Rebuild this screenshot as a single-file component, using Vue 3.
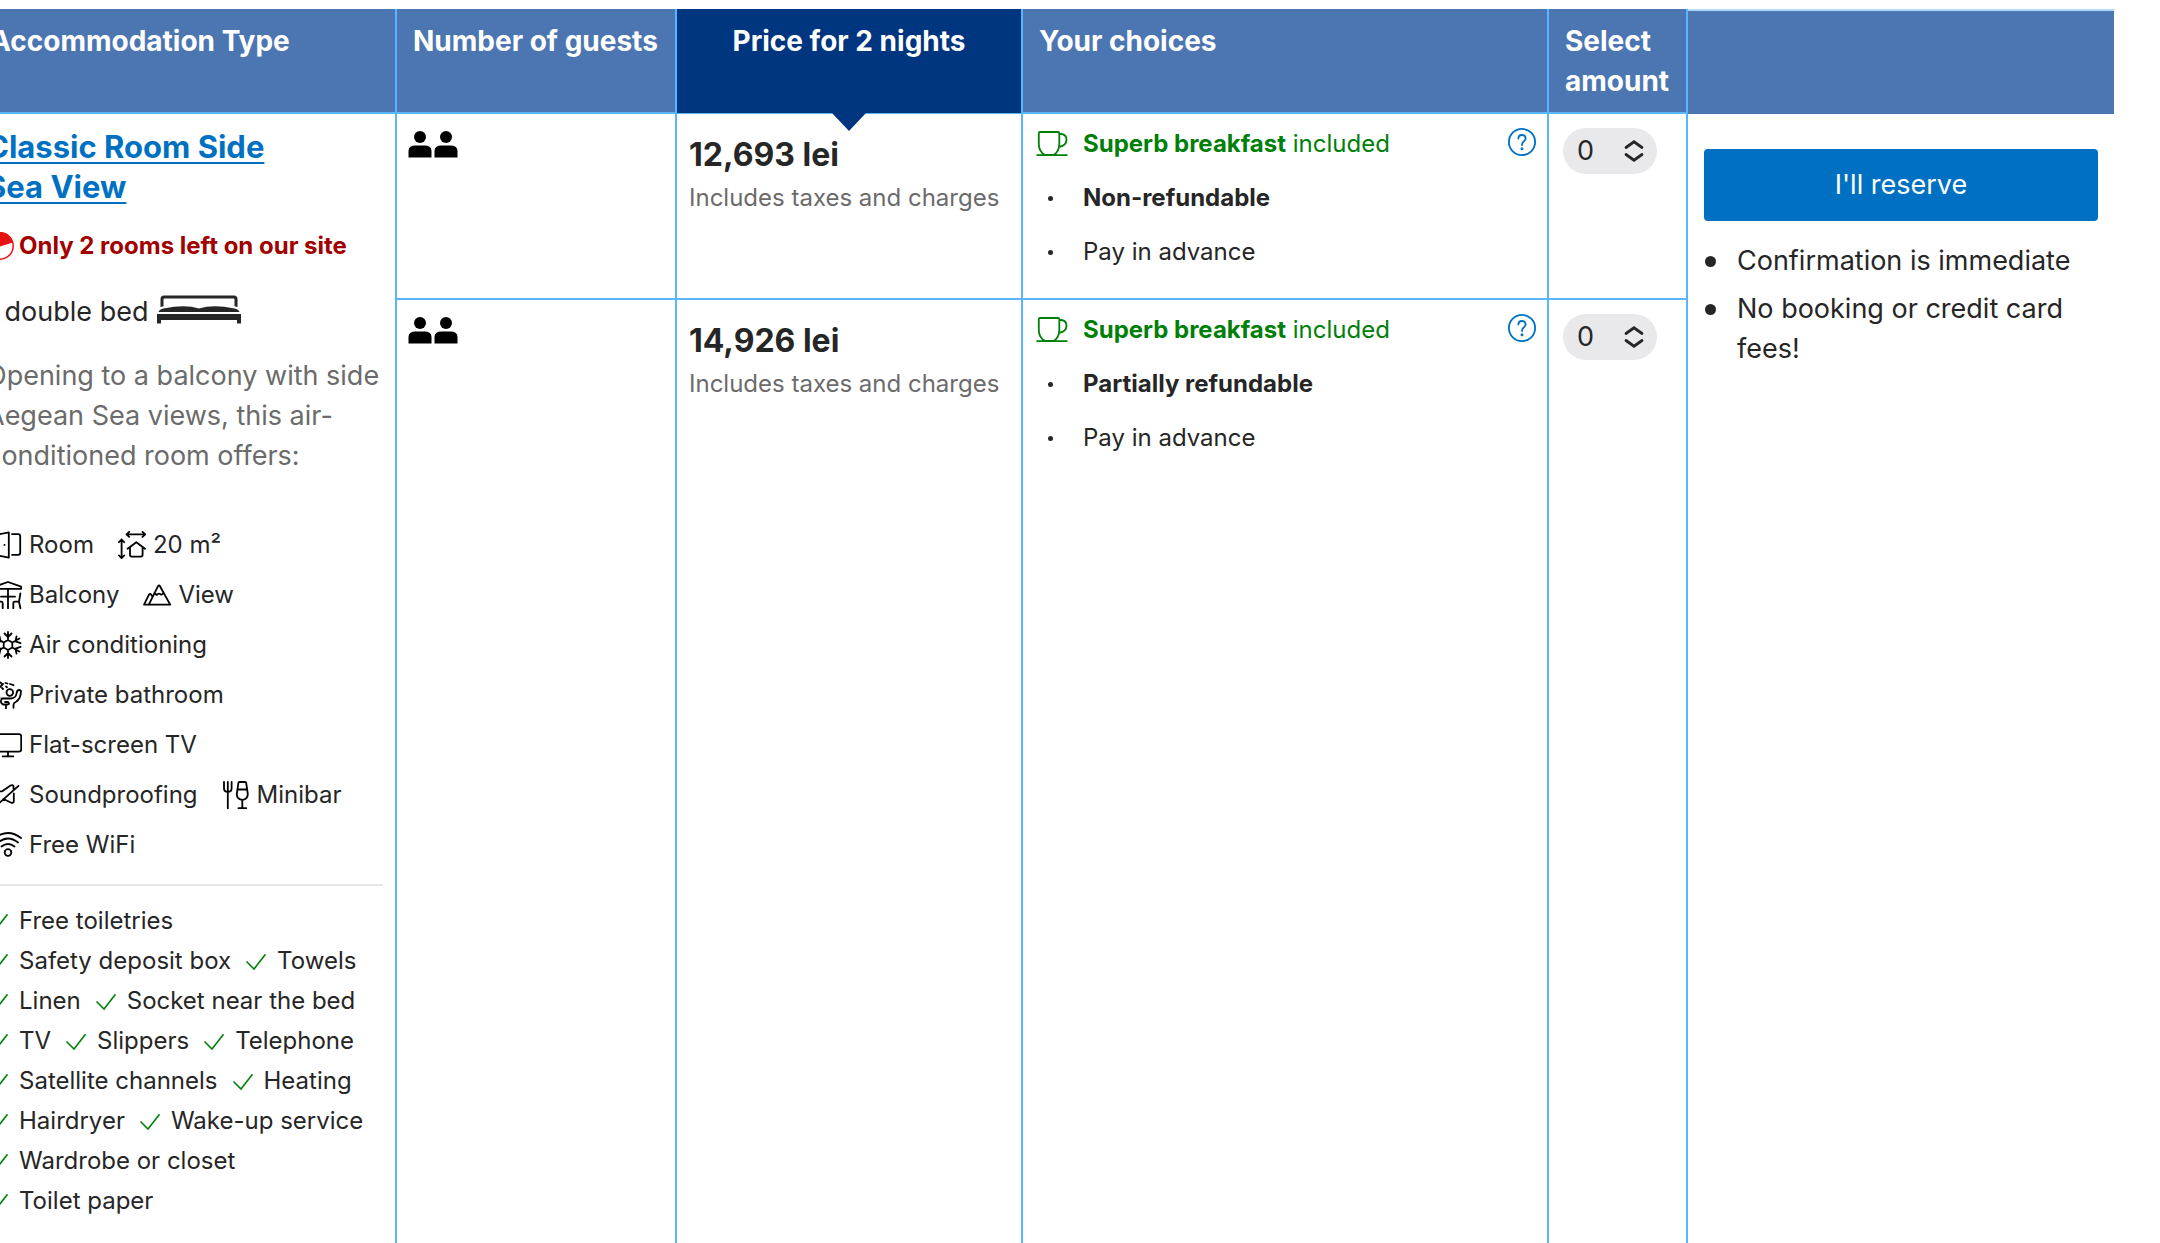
<script setup>
import { ref } from 'vue'

const features = [
  { icon: 'room', label: 'Room' },
  { icon: 'size', label: '20 m²' },
  { icon: 'balcony', label: 'Balcony' },
  { icon: 'view', label: 'View' },
  { icon: 'snow', label: 'Air conditioning' },
  { icon: 'bath', label: 'Private bathroom' },
  { icon: 'tv', label: 'Flat-screen TV' },
  { icon: 'sound', label: 'Soundproofing' },
  { icon: 'minibar', label: 'Minibar' },
  { icon: 'wifi', label: 'Free WiFi' },
]

const iconPaths = {
  room: 'M14.8 1.3 1.5 4v20l13.300 2.700zM18 3.200h6.200q2 0 2 2v16.600q0 2-2 2H18M10.400 13.900h.2',
  size: 'M8.500 3.400h18.700M11.200.9 8.500 3.400l2.700 2.500M24.500.9l2.700 2.500-2.700 2.500M3.600 8.500v18.700M1 11.200l2.600-2.700 2.600 2.700M1 24.500l2.600 2.700 2.600-2.700M9.600 17.800l8.700-6.600 8.700 6.600M12 16v7.800q0 1.800 1.800 1.800h9q1.800 0 1.800-1.800V16',
  balcony: 'M14 1 .9 5.600v2.200h26.200V5.600zM14 7.800v19.700M7 15.700h14M1.600 12.500 3 20.700h4.200q1.500 0 1.500 1.500v5M3 20.700l-1.400 6.500M26.400 12.500 25 20.700h-4.200q-1.500 0-1.500 1.500v5M25 20.700l1.400 6.500',
  view: 'M5.800 23.600 15 5.200q1-1.500 2 0l10.200 18.400H1L6 13.600q1-1.300 2.200 0l1.200 2M11.500 12l1.600 1.600q1 .5 1.600-.6 1.200-.8 2.400 0 .8 1.100 1.800.4l1.600-1.600',
  snow: 'M14 1v8M14 19v8M2.700 7.500l7 4M18.300 16.500l7 4M2.700 20.500l7-4M18.300 11.500l7-4M10.500 2.500 14 6l3.500-3.500M10.500 25.500 14 22l3.500 3.500M1.500 12.200l5-1.800-1-5M26.500 12.200l-5-1.800 1-5M1.500 15.800l5 1.800-1 5M26.500 15.800l-5 1.800 1 5M14 9l4.300 2.500v5L14 19l-4.300-2.500v-5z',
  bath: 'M1 9V4q0-3 3-3 3.500 0 4 3M4.500 7.500 9 3M8 7l1 1M11.500 2l2 .5M16 3l3.500 1.200M12 5.500l1 .7M5 15l.5 2M12.500 11.500a3.300 3.300 0 1 0 6.600 0 3.300 3.300 0 1 0-6.600 0M8 17.500h9q5-.5 5.500-5l.7-2.500q2-2 3.800 0-.2 8-5 10.800-2.500 1.200-2.500 3v3M8 17.500q-2.500 4 1 6h5q2-.5 0-2.500h-3M12 24v3.500',
  tv: 'M3 3.200h22q2.200 0 2.200 2.200v13q0 2.200-2.200 2.200H3q-2.200 0-2.200-2.200v-13Q.8 3.200 3 3.200zM14 20.600v4.600M8.700 25.400h10.600',
  sound: 'M2 25 24.500 4.800M3 16.500v-5q0-1.200 1.200-1.200h4L16.500 4.500q2-1 3 .5v3M19.800 12.500v8q-.5 2-2.500 1.200L9.500 18',
  minibar: 'M2 1v6.500q0 3.300 3.800 3.300T9.600 7.500V1M5.800 1v26.500M17.500 1h5.500q1 0 1.200 1l1.600 11q0 5-5.500 6-5.500-1-5.500-6l1.600-11q.1-1 1.100-1zM16 8.500h8.700M20.300 19v8M16.500 27.200h7.700',
  wifi: 'M.9 7Q14-3 27.100 7M4 11.500q10-8 20 0M7.500 15.500q6.500-5 13 0M10.700 21.500a3.300 3.300 0 1 0 6.600 0 3.300 3.300 0 1 0-6.600 0',
}

const amenities = [
  'Free toiletries', 'Safety deposit box', 'Towels', 'Linen', 'Socket near the bed',
  'TV', 'Slippers', 'Telephone', 'Satellite channels', 'Heating', 'Hairdryer',
  'Wake-up service', 'Wardrobe or closet', 'Toilet paper',
]

const offers = ref([
  { id: 'flex-0', price: '12,693 lei', policy: 'Non-refundable', amount: 0 },
  { id: 'flex-1', price: '14,926 lei', policy: 'Partially refundable', amount: 0 },
])
</script>

<template>
  <main class="availability">
    <table class="rooms">
      <colgroup>
        <col class="col-type" /><col class="col-guests" /><col class="col-price" />
        <col /><col class="col-amount" /><col class="col-reserve" />
      </colgroup>
      <thead>
        <tr>
          <th scope="col">Accommodation Type</th>
          <th scope="col">Number of guests</th>
          <th scope="col" class="price-head">Price for 2 nights</th>
          <th scope="col">Your choices</th>
          <th scope="col">Select amount</th>
          <td class="reserve-head"></td>
        </tr>
      </thead>
      <tbody>
        <tr v-for="(offer, i) in offers" :key="offer.id" :class="{ first: i === 0 }">
          <td v-if="i === 0" rowspan="2" class="type">
            <a href="#room" class="room-name">Classic Room Side Sea View</a>
            <p class="scarcity">
              <svg width="28" height="28" viewBox="0 0 28 28" aria-hidden="true">
                <circle cx="14" cy="14" r="13.200" fill="#fff" stroke="#e71212" stroke-width="1.500" />
                <path d="M14 14.500 27 10.500A13.500 13.500 0 1 0 2 20z" fill="#e71212" />
              </svg>
              <strong>Only 2 rooms left on our site</strong>
            </p>
            <p class="beds">
              <span>1 double bed</span>
              <svg width="84" height="34" viewBox="0 0 84 34" fill="#262626" aria-hidden="true">
                <path d="M3.500 12V4Q3.500.5 7 .5h70q3.500 0 3.500 3.500v8l-3-.8V4.500q0-1-1-1h-69q-1 0-1 1v6.700z" />
                <path d="M1.500 17q1-3 5-3.500Q28 9 42 13.500 56 9 77.500 13.500q4 .5 5 3.500z" />
                <path d="M0 19h84v9.500h-4V25H4v3.500H0z" />
              </svg>
            </p>
            <p class="description">Opening to a balcony with side Aegean Sea views, this air-conditioned room offers:</p>
            <ul class="features">
              <li v-for="f in features" :key="f.label">
                <svg width="28" height="28" viewBox="0 0 28 28" aria-hidden="true"><path :d="iconPaths[f.icon]" /></svg>
                <span>{{ f.label }}</span>
              </li>
            </ul>
            <hr />
            <ul class="amenities">
              <li v-for="a in amenities" :key="a">
                <svg width="24" height="24" viewBox="0 0 24 24" aria-hidden="true"><path d="M2.500 12.500 10 20 21.500 5.200" /></svg>
                <span>{{ a }}</span>
              </li>
            </ul>
          </td>
          <td class="guests">
            <svg width="50" height="27" viewBox="0 0 50 27" role="img" aria-label="2 guests">
              <g v-for="x in [0, 26]" :key="x" :transform="`translate(${x} 0)`">
                <circle cx="11" cy="6" r="6" />
                <path d="M-.5 26.500V20q0-5.500 7-5.500h9q7 0 7 5.500v6.500z" />
              </g>
            </svg>
          </td>
          <td class="price">
            <div class="amount">{{ offer.price }}</div>
            <div class="taxes">Includes taxes and charges</div>
          </td>
          <td class="choices">
            <div class="choice-row">
              <ul>
                <li class="breakfast">
                  <svg width="32" height="26" viewBox="0 0 32 26" aria-hidden="true">
                    <path d="M4 1h18q1.300 0 1.300 1.300V13q0 8-6 11h-8q-6.500-3-6.500-11V2.300Q2.800 1 4 1zM23.300 3h2.200q5 .8 5 5.500 0 6.500-8 7.500M.5 24.200h31" />
                  </svg>
                  <span><b>Superb breakfast</b> included</span>
                </li>
                <li class="dot"><b>{{ offer.policy }}</b></li>
                <li class="dot">Pay in advance</li>
              </ul>
              <button type="button" class="help" aria-label="More about this offer">
                <svg width="28" height="28" viewBox="0 0 28 28" aria-hidden="true">
                  <circle cx="14" cy="14" r="13.100" />
                  <path d="M10.300 10.500Q10.500 7 14 7t3.700 3.300q0 1.800-2 3.200-1.700 1.200-1.700 3.500" />
                  <circle cx="14" cy="20.700" r=".6" />
                </svg>
              </button>
            </div>
          </td>
          <td class="select-cell">
            <div class="picker">
              <select v-model="offer.amount" aria-label="Select amount">
                <option v-for="n in 3" :key="n" :value="n - 1">{{ n - 1 }}</option>
              </select>
              <svg width="20" height="22" viewBox="0 0 20 22" aria-hidden="true">
                <path d="M2 7.500 10 1.800 18 7.500M2 14.500l8 5.700 8-5.700" />
              </svg>
            </div>
          </td>
          <td v-if="i === 0" rowspan="2" class="reserve">
            <button type="button" class="reserve-button">I'll reserve</button>
            <ul>
              <li>Confirmation is immediate</li>
              <li>No booking or credit card fees!</li>
            </ul>
          </td>
        </tr>
      </tbody>
    </table>
  </main>
</template>

<style>
body {
  background: #fff;
  overflow-x: hidden;
}
</style>

<style scoped>
.availability {
  overflow: hidden;
  padding-top: 9px;
  font-family: Inter, "Liberation Sans", sans-serif;
  font-size: 24px;
  line-height: 32px;
  color: #262626;
}
.rooms {
  width: calc(100% - 18px);
  margin-left: -28px;
  table-layout: fixed;
  border-collapse: separate;
  border-spacing: 0;
}
.col-type { width: 425px; }
.col-guests { width: 280px; }
.col-price { width: 346px; }
.col-amount { width: 139px; }
.col-reserve { width: 426px; }
ul {
  list-style: none;
  margin: 0;
  padding: 0;
}
p { margin: 0; }
b, strong { font-weight: 700; }
th, td {
  vertical-align: top;
  text-align: left;
  padding: 12px;
  border-right: 2px solid #5ab5ff;
  border-bottom: 2px solid #5ab5ff;
}
th {
  background: #4c76b2;
  color: #fff;
  font-size: 28px;
  line-height: 40px;
  font-weight: 700;
  padding: 12px 8px 11px 16px;
}
th:first-child, .type { border-left: 2px solid #5ab5ff; }
.price-head {
  position: relative;
  background: #003580;
  text-align: center;
  padding: 12px 16px;
  border-bottom-width: 1px;
}
.price-head::after {
  content: "";
  position: absolute;
  top: 100%;
  left: 50%;
  margin-left: -17px;
  border: 17px solid transparent;
  border-top: 18px solid #003580;
  border-bottom: 0;
}
.reserve-head {
  background: #4c76b2;
  border-top: 2px solid #b2d8fa;
  border-right: 0;
  border-bottom: 0;
}
.first { height: 186px; }
tbody tr:last-child td, .type { border-bottom: 0; }
.type { padding: 13px 12px 22px; }
.room-name {
  display: block;
  width: 320px;
  font-size: 31px;
  line-height: 40px;
  font-weight: 700;
  color: #0071c2;
  text-underline-offset: 4px;
  text-decoration-thickness: 2px;
}
.scarcity {
  display: flex;
  align-items: center;
  gap: 5px;
  margin-top: 19px;
  line-height: 40px;
  color: #a30000;
  white-space: nowrap;
}
.beds {
  display: flex;
  align-items: center;
  gap: 9px;
  margin-top: 26px;
  font-size: 27px;
  line-height: 40px;
}
.description {
  margin-top: 24px;
  font-size: 27px;
  line-height: 40px;
  color: #6b6b6b;
}
.features {
  display: flex;
  flex-wrap: wrap;
  margin: 44px 0 0 8px;
}
.features li {
  display: flex;
  align-items: center;
  gap: 7px;
  margin-right: 24px;
  line-height: 50px;
  white-space: nowrap;
}
.features path {
  fill: none;
  stroke: #000;
  stroke-width: 1.8;
  stroke-linecap: round;
  stroke-linejoin: round;
}
hr {
  margin: 14px 0 15px;
  border: 0;
  border-top: 2px solid #e7e7e7;
}
.amenities {
  display: flex;
  flex-wrap: wrap;
  column-gap: 13px;
}
.amenities li {
  display: flex;
  align-items: center;
  gap: 9px;
  line-height: 40px;
  white-space: nowrap;
}
.amenities path {
  fill: none;
  stroke: #008009;
  stroke-width: 1.6;
}
svg { flex: none; }
.guests svg {
  display: block;
  margin-top: 5px;
  overflow: visible;
}
.price { padding-top: 21px; }
.amount {
  font-size: 32px;
  line-height: 40px;
  font-weight: 700;
}
.taxes {
  margin-top: 7px;
  color: #6b6b6b;
  white-space: nowrap;
}
.choices { padding: 14px 11px 12px 13px; }
.choice-row {
  display: flex;
  justify-content: space-between;
  align-items: flex-start;
}
.choice-row ul {
  display: grid;
  gap: 22px;
}
.breakfast {
  display: flex;
  align-items: center;
  gap: 15px;
  color: #008009;
}
.breakfast path {
  fill: none;
  stroke: #008009;
  stroke-width: 1.8;
}
.dot {
  display: flex;
  align-items: center;
}
.dot::before {
  content: "";
  width: 5px;
  height: 5px;
  margin: 0 30px 0 12px;
  border-radius: 50%;
  background: #262626;
}
.help {
  display: flex;
  padding: 0;
  border: 0;
  background: none;
}
.help svg {
  fill: none;
  stroke: #0071c2;
  stroke-width: 1.8;
  stroke-linecap: round;
}
.select-cell { padding: 14px; }
.picker {
  position: relative;
  width: 94px;
}
.picker select {
  display: block;
  width: 100%;
  height: 46px;
  padding: 0 14px;
  appearance: none;
  border: 0;
  border-radius: 23px;
  background: #e9e9eb;
  color: #262626;
  font: 27px/46px Inter, "Liberation Sans", sans-serif;
}
.picker svg {
  position: absolute;
  top: 12px;
  right: 13px;
  fill: none;
  stroke: #262626;
  stroke-width: 2.800;
  stroke-linecap: round;
  pointer-events: none;
}
.reserve {
  padding: 35px 16px 16px;
  border: 0;
  font-size: 27px;
  line-height: 40px;
}
.reserve-button {
  display: block;
  width: 100%;
  height: 72px;
  margin-bottom: 20px;
  border: 0;
  border-radius: 4px;
  background: #0071c2;
  color: #fff;
  font: inherit;
}
.reserve li {
  display: flex;
  margin-bottom: 8px;
}
.reserve li::before {
  content: "";
  flex: none;
  width: 11px;
  height: 11px;
  margin: 15px 21px 0 1px;
  border-radius: 50%;
  background: #262626;
}
</style>
